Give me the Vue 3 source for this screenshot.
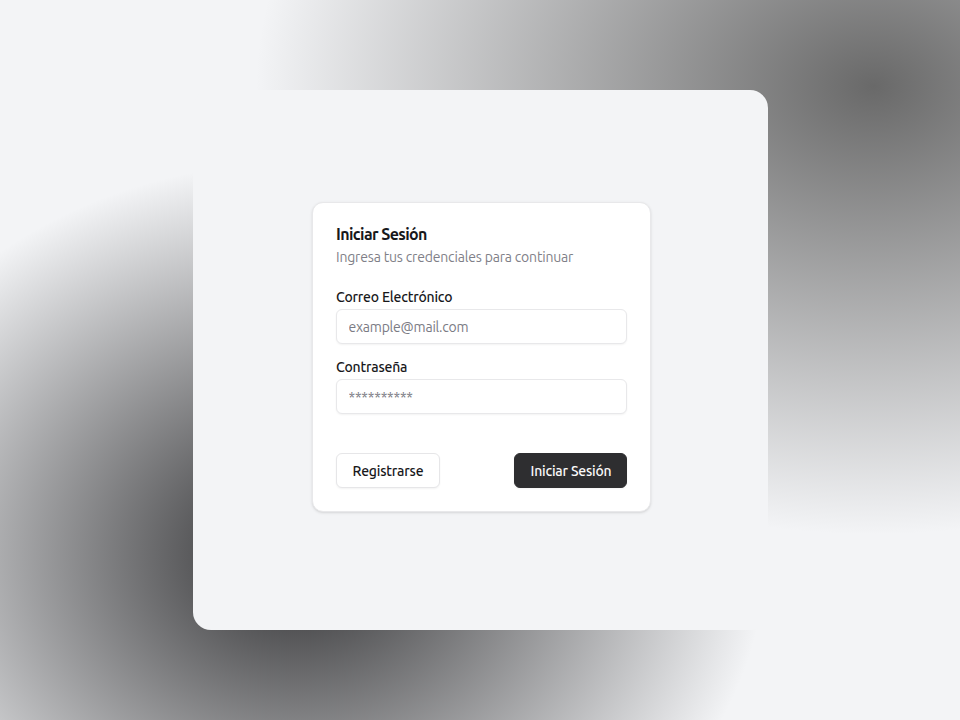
<script setup>
import { ref } from 'vue'

const email = ref('')
const password = ref('')
</script>

<template>
  <main class="page">
    <section class="panel">
      <form class="card" @submit.prevent>
        <header class="heading">
          <h1>Iniciar Sesión</h1>
          <p>Ingresa tus credenciales para continuar</p>
        </header>
        <div class="fields">
          <label class="field">
            <span class="label">Correo Electrónico</span>
            <input v-model="email" type="text" placeholder="example@mail.com" />
          </label>
          <label class="field">
            <span class="label">Contraseña</span>
            <input v-model="password" class="pass" type="password" placeholder="**********" />
          </label>
        </div>
        <footer class="actions">
          <button class="btn outline" type="button">Registrarse</button>
          <button class="btn solid" type="submit">Iniciar Sesión</button>
        </footer>
      </form>
    </section>
  </main>
</template>

<style>
body {
  background: #f3f4f6;
}
</style>

<style scoped>
* {
  box-sizing: border-box;
}
.page {
  height: 720px;
  padding: 90px 192px 90px 193px;
  background-color: #f3f4f6;
  background-image:
    radial-gradient(at 91% 12%, #696969 0, transparent 50%),
    radial-gradient(at 31% 77%, #2e2e30 0, transparent 50%);
  font-family: Ubuntu, "Noto Sans", sans-serif;
  color: #18181b;
}
.panel {
  height: 540px;
  padding: 112px 117px 0 119px;
  border-radius: 18px;
  background: #f3f4f6;
}
.card {
  height: 310px;
  padding: 23px;
  border: 1px solid #e8e8ea;
  border-radius: 11px;
  background: #fff;
  box-shadow: 0 1px 3px rgba(0, 0, 0, 0.1), 0 1px 2px -1px rgba(0, 0, 0, 0.1);
}
.heading {
  height: 64px;
}
h1,
p {
  margin: 0;
}
h1 {
  font-size: 16px;
  line-height: 16px;
  font-weight: 700;
  letter-spacing: -0.6px;
}
p {
  margin-top: 5px;
  font-size: 14px;
  line-height: 20px;
  font-weight: 400;
  letter-spacing: -0.18px;
  color: #7f7f88;
}
.fields {
  display: grid;
  gap: 16px;
}
.field {
  display: grid;
  gap: 4px;
}
.label {
  font-size: 14px;
  line-height: 15px;
  font-weight: 500;
  letter-spacing: -0.2px;
}
input {
  width: 100%;
  height: 35px;
  padding: 0 11.5px;
  border: 1px solid #e8e8ea;
  border-radius: 6px;
  background: #fff;
  box-shadow: 0 1px 2px rgba(0, 0, 0, 0.05);
  font: 400 14px Ubuntu, "Noto Sans", sans-serif;
  letter-spacing: -0.22px;
  outline: none;
}
.pass {
  padding-top: 1px;
}
input::placeholder {
  color: #7b7b84;
}
.actions {
  display: flex;
  justify-content: space-between;
  margin-top: 39px;
}
.btn {
  height: 35px;
  padding: 0;
  border: 1px solid #e6e6e8;
  border-radius: 6px;
  background: #fff;
  color: #18181b;
  box-shadow: 0 1px 2px rgba(0, 0, 0, 0.05);
  font: 500 14px Ubuntu, "Noto Sans", sans-serif;
  letter-spacing: -0.2px;
}
.outline {
  width: 104px;
}
.solid {
  width: 113px;
  padding-left: 1px;
  border-color: #2e2e30;
  background: #2e2e30;
  color: #fafafa;
}
</style>
